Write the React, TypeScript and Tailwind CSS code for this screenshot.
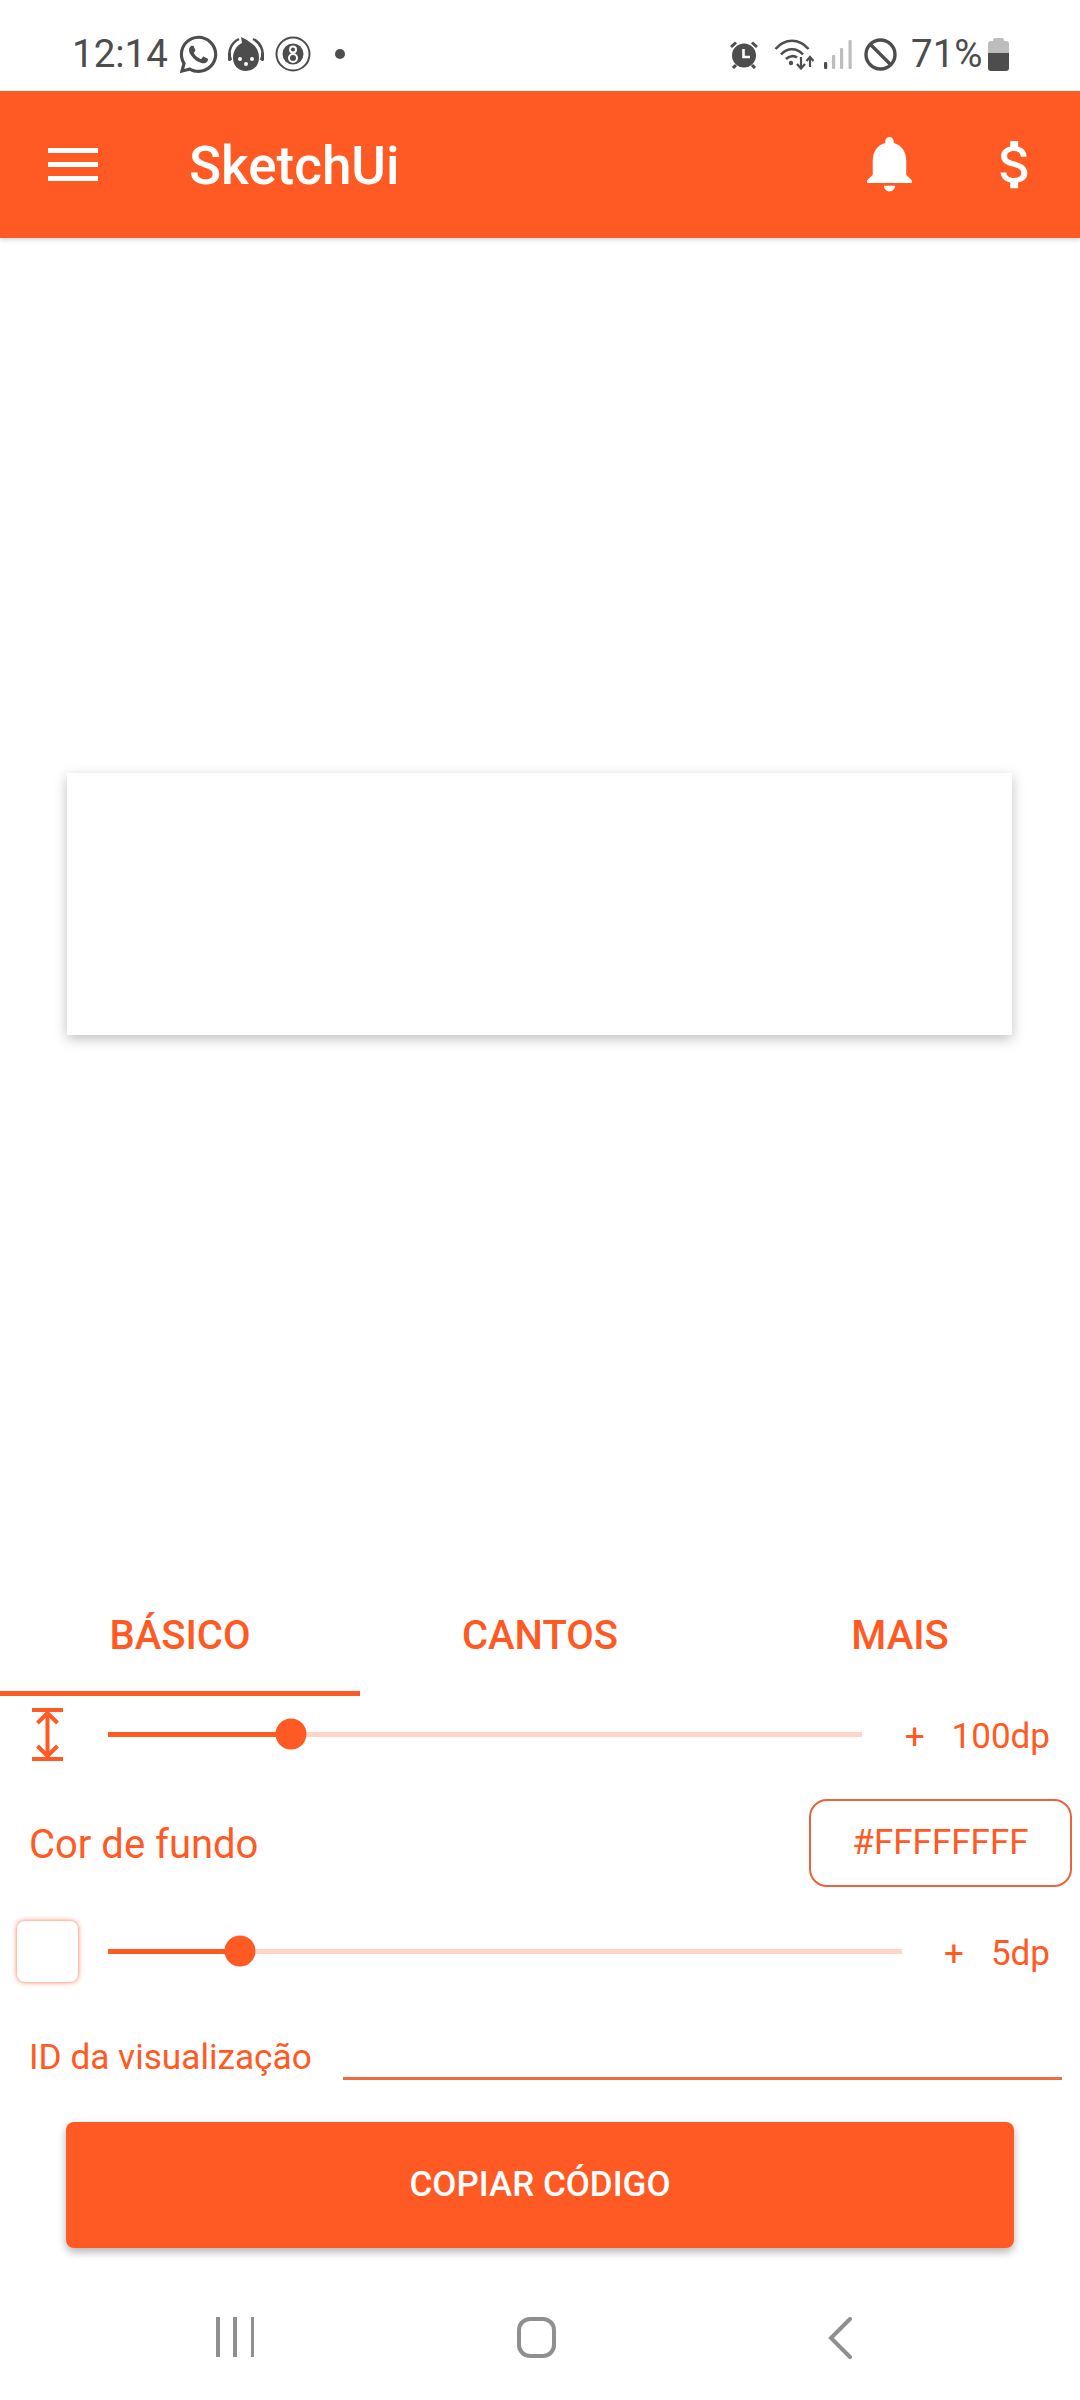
import { FaWhatsapp } from "react-icons/fa";

function BabyIcon() {
  return (
    <svg width="38" height="36" viewBox="0 0 38 36" fill="none">
      <path d="M4 24C0 16 4 7 12 3" stroke="#4d4d4d" strokeWidth="2.5" />
      <path d="M34 24C38 16 34 7 26 3" stroke="#4d4d4d" strokeWidth="2.5" />
      <rect x="1" y="16" width="3" height="9" rx="1.5" fill="#4d4d4d" />
      <rect x="34" y="16" width="3" height="9" rx="1.5" fill="#4d4d4d" />
      <path d="M19 35C11 35 6 29 6 22C6 15 10 9 15 7L14 1L20 4L24 7C29 10 32 15 32 22C32 29 27 35 19 35Z" fill="#4d4d4d" />
      <circle cx="13" cy="23" r="2" fill="#fff" />
      <circle cx="25" cy="23" r="2" fill="#fff" />
      <circle cx="19" cy="28" r="2" fill="#fff" />
    </svg>
  );
}

function EightBallIcon() {
  return (
    <svg width="36" height="36" viewBox="0 0 36 36" fill="none">
      <circle cx="18" cy="18" r="16.5" stroke="#4d4d4d" strokeWidth="2" />
      <circle cx="18" cy="18" r="10.5" fill="#4d4d4d" />
      <circle cx="18" cy="13.5" r="3" stroke="#fff" strokeWidth="2" />
      <circle cx="18" cy="22" r="4" stroke="#fff" strokeWidth="2" />
    </svg>
  );
}

function AlarmIcon() {
  return (
    <svg width="28" height="29" viewBox="0 0 28 29" fill="none">
      <circle cx="14" cy="15.5" r="12" fill="#4d4d4d" />
      <path d="M1 7L6 2.5M27 7L22 2.5" stroke="#4d4d4d" strokeWidth="3" />
      <path d="M3 28L6 25M25 28L22 25" stroke="#4d4d4d" strokeWidth="3" />
      <path d="M13.5 9V17H20" stroke="#fff" strokeWidth="2.6" />
    </svg>
  );
}

function WifiIcon() {
  return (
    <svg width="41" height="32" viewBox="0 0 41 32" fill="none">
      <path d="M1.5 11C11 0 25 0 34.5 11" stroke="#4d4d4d" strokeWidth="2.6" />
      <path d="M7 16.5C13 9.5 23 9.5 29 16.5" stroke="#4d4d4d" strokeWidth="2.6" />
      <path d="M12 21C15.5 17.5 20.5 17.5 23 19.5" stroke="#4d4d4d" strokeWidth="2.6" />
      <circle cx="17" cy="25" r="2.2" fill="#4d4d4d" />
      <path d="M27 19V30M23 26L27 30.5L31 26" stroke="#4d4d4d" strokeWidth="2.2" />
      <path d="M36 29V19M32.5 23L36 19L39.5 23" stroke="#4d4d4d" strokeWidth="2.2" />
    </svg>
  );
}

function SignalIcon() {
  return (
    <svg width="28" height="29" viewBox="0 0 28 29">
      <rect x="0" y="22" width="3.2" height="7" rx="1.2" fill="#4d4d4d" />
      <rect x="8" y="15" width="3.2" height="14" rx="1" fill="#bdbdbd" />
      <rect x="16" y="8" width="3.2" height="21" rx="1" fill="#bdbdbd" />
      <rect x="24.5" y="0" width="3.2" height="29" rx="1" fill="#bdbdbd" />
    </svg>
  );
}

function BlockIcon() {
  return (
    <svg width="33" height="33" viewBox="0 0 33 33" fill="none">
      <circle cx="16.5" cy="16.5" r="14.5" stroke="#4d4d4d" strokeWidth="3.4" />
      <path d="M6.5 6.5L26.5 26.5" stroke="#4d4d4d" strokeWidth="3.4" />
    </svg>
  );
}

function BatteryIcon() {
  return (
    <div className="flex w-[21px] h-[33px] flex-col items-center">
      <div className="w-[11px] h-[3px] rounded-t-[2px] bg-[#bdbdbd]" />
      <div className="w-full h-[12px] rounded-t-[3px] bg-[#bdbdbd]" />
      <div className="w-full h-[18px] rounded-b-[3px] bg-[#4d4d4d]" />
    </div>
  );
}

function HeightIcon() {
  return (
    <svg width="31" height="53" viewBox="0 0 31 53" fill="none">
      <path d="M0 2H31M0 51H31" stroke="#ff5a24" strokeWidth="4" />
      <path d="M15.5 5V48" stroke="#ff5a24" strokeWidth="4" />
      <path d="M5.5 15L15.5 5L25.5 15M5.5 38L15.5 48L25.5 38" stroke="#ff5a24" strokeWidth="4" />
    </svg>
  );
}

function Slider({ width, value }: { width: string; value: number }) {
  return (
    <div className={`relative h-[5px] bg-[#ffd5c8] ${width}`}>
      <div className="h-full bg-[#ff5a24]" style={{ width: value }} />
      <div
        className="absolute top-1/2 h-[31px] w-[31px] -translate-x-1/2 -translate-y-1/2 rounded-full bg-[#ff5a24]"
        style={{ left: value }}
      />
    </div>
  );
}

function Amount({ value }: { value: string }) {
  return (
    <div className="flex flex-1 justify-end pr-[30px] pt-[7px] text-[35px] text-[#ff5a24]">
      <span className="mr-[27px]">+</span>
      <span>{value}</span>
    </div>
  );
}

export default function App() {
  return (
    <div className="flex h-[2400px] w-[1080px] flex-col overflow-hidden bg-white font-['Roboto',sans-serif]">
      {/* Status bar */}
      <div className="flex h-[91px] items-center justify-between pl-[72px] pr-[71px] pt-[17px] text-[38.5px] text-[#4d4d4d]">
        <div className="flex items-center">
          <span className="w-[105px]">12:14</span>
          <FaWhatsapp className="h-[43px] w-[43px]" />
          <span className="ml-[7px]">
            <BabyIcon />
          </span>
          <span className="ml-[10px]">
            <EightBallIcon />
          </span>
          <span className="ml-[24px] h-[10px] w-[10px] rounded-full bg-[#4d4d4d]" />
        </div>
        <div className="flex items-center">
          <AlarmIcon />
          <span className="ml-[16px]">
            <WifiIcon />
          </span>
          <span className="ml-[9px]">
            <SignalIcon />
          </span>
          <span className="ml-[12px]">
            <BlockIcon />
          </span>
          <span className="ml-[14px] w-[77px]">71%</span>
          <BatteryIcon />
        </div>
      </div>

      {/* App bar */}
      <div className="relative flex h-[147px] items-center bg-[#ff5a24] shadow-[0_2px_5px_rgba(0,0,0,0.15)]">
        <div className="ml-[48px] flex w-[50px] flex-col gap-[9px]">
          <div className="h-[5px] bg-white" />
          <div className="h-[5px] bg-white" />
          <div className="h-[5px] bg-white" />
        </div>
        <span className="ml-[91px] pt-[3px] text-[53px] font-medium leading-none text-white">SketchUi</span>
        <svg className="mb-[3px] ml-auto" width="67" height="67" viewBox="0 0 24 24" fill="#fff">
          <path d="M12 22c1.1 0 2-.9 2-2h-4c0 1.1.9 2 2 2zm6-6v-5c0-3.07-1.63-5.64-4.5-6.32V4c0-.83-.67-1.5-1.5-1.5s-1.5.67-1.5 1.5v.68C7.64 5.36 6 7.92 6 11v5l-2 2v1h16v-1l-2-2z" />
        </svg>
        <svg className="ml-[61px] mr-[33px]" width="63" height="63" viewBox="0 0 24 24" fill="#fff">
          <path d="M11.8 10.9c-2.27-.59-3-1.2-3-2.15 0-1.09 1.01-1.85 2.7-1.85 1.78 0 2.44.85 2.5 2.1h2.21c-.07-1.72-1.12-3.3-3.21-3.81V3h-3v2.16c-1.94.42-3.5 1.68-3.5 3.61 0 2.31 1.91 3.46 4.7 4.13 2.5.6 3 1.48 3 2.41 0 .69-.49 1.79-2.7 1.79-2.06 0-2.87-.92-2.98-2.1h-2.2c.12 2.19 1.76 3.42 3.68 3.83V21h3v-2.15c1.95-.37 3.5-1.5 3.5-3.55 0-2.84-2.43-3.81-4.7-4.4z" />
        </svg>
      </div>

      {/* Preview */}
      <div className="flex h-[1331px] items-center justify-center pr-[1px]">
        <div className="h-[262px] w-[945px] bg-white shadow-[0_4px_12px_rgba(0,0,0,0.25)]" />
      </div>

      {/* Tabs */}
      <div className="flex h-[127px] text-[40px] font-medium text-[#ff5a24]">
        <div className="flex w-[360px] items-center justify-center border-b-[5px] border-[#ff5a24] pt-[12px]">BÁSICO</div>
        <div className="flex w-[360px] items-center justify-center pb-[5px] pt-[12px]">CANTOS</div>
        <div className="flex w-[360px] items-center justify-center pb-[5px] pt-[12px]">MAIS</div>
      </div>

      {/* Height */}
      <div className="flex h-[76px] items-center">
        <div className="flex w-[95px] justify-center">
          <HeightIcon />
        </div>
        <div className="ml-[13px]">
          <Slider width="w-[754px]" value={183} />
        </div>
        <Amount value="100dp" />
      </div>

      {/* Background colour */}
      <div className="flex h-[142px] items-center justify-between pl-[29px] pr-[8px]">
        <span className="pt-[4px] text-[40px] text-[#ff5a24]">Cor de fundo</span>
        <div className="flex h-[88px] w-[263px] items-center justify-center rounded-[18px] border-[2.5px] border-[#e9643a] text-[35px] text-[#ff5a24]">
          #FFFFFFFF
        </div>
      </div>

      {/* Elevation */}
      <div className="flex h-[74px] items-center">
        <div className="flex w-[95px] justify-center">
          <div className="h-[61px] w-[61px] rounded-[8px] bg-white shadow-[0_0_5px_rgba(255,90,36,0.9)]" />
        </div>
        <div className="ml-[13px]">
          <Slider width="w-[794px]" value={132} />
        </div>
        <Amount value="5dp" />
      </div>

      {/* View id */}
      <div className="flex h-[92px] items-end pl-[29px] pr-[18px]">
        <span className="mb-[-4px] w-[314px] text-[35.2px] text-[#ff5a24]">ID da visualização</span>
        <div className="flex-1 border-b-[3px] border-[#ee6a3f]" />
      </div>

      {/* Copy */}
      <div className="flex-1 px-[66px] pt-[42px]">
        <div className="flex h-[126px] items-center justify-center rounded-[8px] bg-[#ff5a24] text-[35px] font-medium text-white shadow-[0_4px_8px_rgba(0,0,0,0.3)]">
          COPIAR CÓDIGO
        </div>
      </div>

      {/* Nav bar */}
      <div className="flex h-[152px] items-start pt-[69px]">
        <div className="ml-[216px] flex w-[38px] justify-between">
          <div className="h-[40px] w-[3.5px] bg-[#8f8f8f]" />
          <div className="h-[40px] w-[3.5px] bg-[#8f8f8f]" />
          <div className="h-[40px] w-[3.5px] bg-[#8f8f8f]" />
        </div>
        <div className="ml-[263px] h-[41px] w-[39px] rounded-[13px] border-[4px] border-[#8f8f8f]" />
        <svg className="ml-[272px]" width="24" height="42" viewBox="0 0 24 42" fill="none">
          <path d="M22 2L3 21L22 40" stroke="#8f8f8f" strokeWidth="4" strokeLinecap="round" />
        </svg>
      </div>
    </div>
  );
}
